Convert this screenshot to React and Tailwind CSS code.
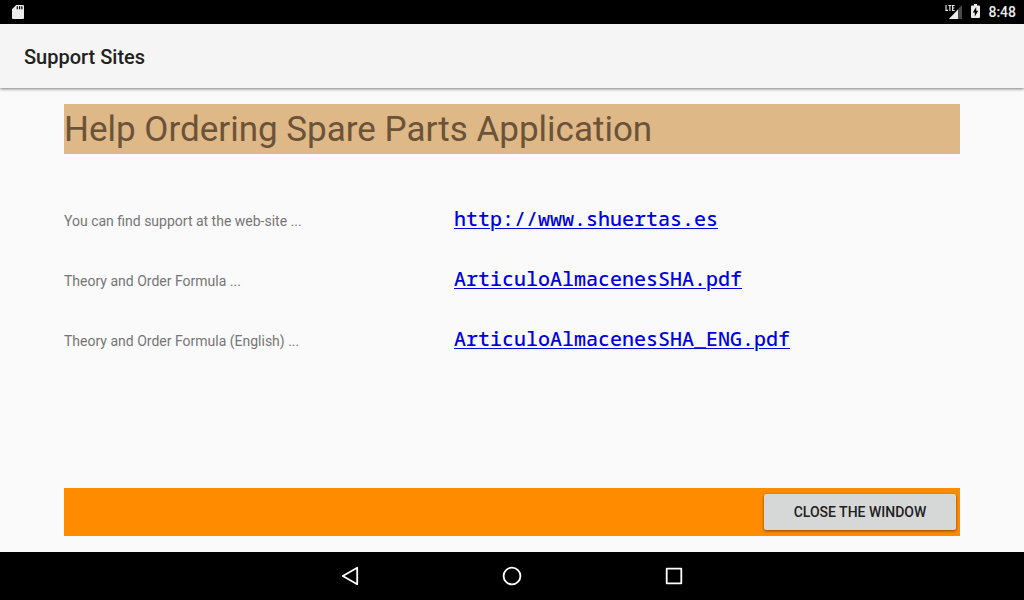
const LINKS = [
  { id: "site", label: "You can find support at the web-site ...", text: "http://www.shuertas.es", href: "http://www.shuertas.es" },
  { id: "theory", label: "Theory and Order Formula ...", text: "ArticuloAlmacenesSHA.pdf", href: "#ArticuloAlmacenesSHA.pdf" },
  { id: "theory-eng", label: "Theory and Order Formula (English) ...", text: "ArticuloAlmacenesSHA_ENG.pdf", href: "#ArticuloAlmacenesSHA_ENG.pdf" },
];

function StatusBar() {
  return (
    <div className="flex h-6 items-center justify-between bg-black px-2 text-[#ececec]">
      <svg className="ml-1 h-4 w-3" viewBox="0 0 12 16" aria-hidden="true">
        <path fill="#ececec" fillRule="evenodd" d="M4.200 1H11a1 1 0 0 1 1 1v12a1 1 0 0 1-1 1H1a1 1 0 0 1-1-1V5.200zM4.700 2.200v3h1.200v-3zM7 2.200v3h1.200v-3zM9.300 2.200v3h1.200v-3z" />
      </svg>
      <div className="flex items-center">
        <svg className="h-4 w-[18px]" viewBox="0 0 18 16" aria-hidden="true">
          <path fill="#4a4a4a" d="M17 1v14H4z" />
          <path fill="#000" d="M0 0h10v8H0z" />
          <path fill="#ececec" d="M13 5.500V15H4z" />
          <path fill="#000" d="M0 0h10.500v7.500H0z" />
          <path fill="none" stroke="#ececec" strokeWidth="1.100" d="M1 1v5.400h2M3.400 1.500h3M4.900 1.500V7M9.600 1.500H7.600v5h2M7.600 4h1.700" />
        </svg>
        <svg className="ml-2 h-4 w-[9px]" viewBox="0 0 9 16" aria-hidden="true">
          <path fill="#ececec" d="M3 0h3v1.500h2a1 1 0 0 1 1 1V13a1 1 0 0 1-1 1H1a1 1 0 0 1-1-1V2.500a1 1 0 0 1 1-1h2z" />
          <path fill="#000" d="M5.200 3 1.800 8.600h2v3.900l3.400-5.700h-2z" />
        </svg>
        <span className="ml-2 text-sm leading-6 font-medium">8:48</span>
      </div>
    </div>
  );
}

function NavigationBar() {
  return (
    <nav className="flex h-12 items-center justify-center gap-[138px] bg-black">
      <button type="button" aria-label="Back" className="h-6 w-6">
        <svg viewBox="0 0 24 24" fill="none" stroke="#fff" strokeWidth="1.800" strokeLinejoin="round" aria-hidden="true">
          <path d="M19.200 3.800v16.400L4.800 12z" />
        </svg>
      </button>
      <button type="button" aria-label="Home" className="h-6 w-6">
        <svg viewBox="0 0 24 24" fill="none" stroke="#fff" strokeWidth="1.800" aria-hidden="true">
          <circle cx="12" cy="12" r="8.400" />
        </svg>
      </button>
      <button type="button" aria-label="Recent apps" className="h-6 w-6">
        <svg viewBox="0 0 24 24" fill="none" stroke="#fff" strokeWidth="1.800" strokeLinejoin="round" aria-hidden="true">
          <path d="M4.700 4.700h14.600v14.600H4.700z" />
        </svg>
      </button>
    </nav>
  );
}

export default function App() {
  return (
    <div className="flex min-h-screen flex-col bg-[#fafafa] font-['Roboto',sans-serif]">
      <StatusBar />
      <header className="flex h-16 items-center bg-[#f5f5f5] px-6 pt-0.5 shadow-[0_1px_3px_rgba(0,0,0,0.5)]">
        <h1 className="text-xl font-medium text-[#212121]">Support Sites</h1>
      </header>
      <main className="flex grow flex-col px-16 py-4">
        <h2 className="bg-[#deb887] pt-0.5 text-[35px] leading-12 text-[#6b5339]">Help Ordering Spare Parts Application</h2>
        <dl className="mt-9 flex flex-col">
          {LINKS.map((link) => (
            <div key={link.id} className="grid h-[60px] grid-cols-[390px_1fr] items-center">
              <dt id={link.id} className="pt-0.5 text-sm text-[#757575]">{link.label}</dt>
              <dd className="pb-0.5 text-xl">
                <a
                  href={link.href}
                  aria-describedby={link.id}
                  className="font-['Noto_Sans_Mono','DejaVu_Sans_Mono',monospace] font-medium text-[#0000e0] underline decoration-1 underline-offset-2"
                >
                  {link.text}
                </a>
              </dd>
            </div>
          ))}
        </dl>
        <div className="mt-auto flex h-12 items-center justify-end bg-[#ff8c00] px-1">
          <button type="button" className="h-9 w-48 rounded-xs bg-[#d6d7d7] text-sm font-medium text-[#212121] uppercase shadow-[0_1px_3px_rgba(0,0,0,0.5)]">
            Close the window
          </button>
        </div>
      </main>
      <NavigationBar />
    </div>
  );
}
